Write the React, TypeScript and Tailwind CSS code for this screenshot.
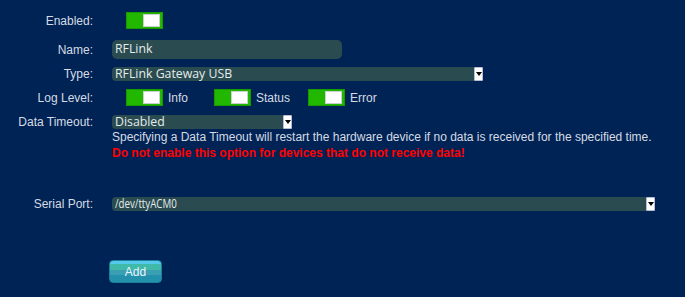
import React from "react";

function Toggle() {
  return (
    <div className="flex h-[17px] w-[37px] items-center justify-end border border-[#179a00] bg-[#22b800] pr-[2px]">
      <div className="h-[13px] w-[17px] border border-[#c8d0d0] bg-white" />
    </div>
  );
}

function Select({ value, width, condensed }: { value: string; width: string; condensed?: boolean }) {
  return (
    <div className={`flex h-[14px] items-stretch rounded-l-[4px] bg-[#2a4b50] ${width}`}>
      <div
        className="flex flex-1 items-center pl-[3px] text-[12.3px] leading-none text-[#e4ecec]"
        style={{ fontFamily: '"Open Sans", "Noto Sans", sans-serif' }}
      >
        {condensed ? (
          <span className="inline-block origin-left scale-x-[0.72] text-[13.5px]">{value}</span>
        ) : (
          value
        )}
      </div>
      <div className="flex w-[9px] items-start justify-center rounded-[1px] border border-[#b8bcd8] bg-white pt-[4px]">
        <div className="h-0 w-0 border-x-[3px] border-t-[4px] border-x-transparent border-t-black" />
      </div>
    </div>
  );
}

export default function App() {
  const label = "w-[93px] shrink-0 text-right text-[12px] text-[#d6dbe2]";
  return (
    <div
      className="min-h-[297px] w-full bg-[#002356] pt-[12px]"
      style={{ fontFamily: '"Liberation Sans", Arial, sans-serif' }}
    >
      <div className="flex h-[17px] items-center">
        <div className={label}>Enabled:</div>
        <div className="ml-[33px]">
          <Toggle />
        </div>
      </div>

      <div className="mt-[11px] flex h-[19px] items-center">
        <div className={label}>Name:</div>
        <div
          className="ml-[19px] flex h-[19px] w-[230px] items-center rounded-[5px] bg-[#2a4b50] pl-[3px] text-[12.3px] text-[#e4ecec]"
          style={{ fontFamily: '"Open Sans", "Noto Sans", sans-serif' }}
        >
          RFLink
        </div>
      </div>

      <div className="mt-[8px] flex h-[14px] items-center">
        <div className={label}>Type:</div>
        <div className="ml-[19px]">
          <Select value="RFLink Gateway USB" width="w-[371px]" />
        </div>
      </div>

      <div className="mt-[8px] flex h-[17px] items-center">
        <div className={label}>Log Level:</div>
        <div className="ml-[33px] flex items-center text-[12px] text-[#d6dbe2]">
          <Toggle />
          <span className="ml-[5px] mr-[26px]">Info</span>
          <Toggle />
          <span className="ml-[5px] mr-[18px]">Status</span>
          <Toggle />
          <span className="ml-[5px]">Error</span>
        </div>
      </div>

      <div className="mt-[9px] flex items-start">
        <div className={`${label} leading-[14px]`}>Data Timeout:</div>
        <div className="ml-[19px] flex flex-col">
          <Select value="Disabled" width="w-[180px]" />
          <div className="text-[12px] leading-[16px] text-[#d6dbe2]">
            Specifying a Data Timeout will restart the hardware device if no data is received for the specified time.
          </div>
          <div className="text-[12px] font-bold leading-[16px] text-[#ff0000]">
            Do not enable this option for devices that do not receive data!
          </div>
        </div>
      </div>

      <div className="mt-[36px] flex h-[14px] items-center">
        <div className={label}>Serial Port:</div>
        <div className="ml-[19px]">
          <Select value="/dev/ttyACM0" width="w-[543px]" condensed />
        </div>
      </div>

      <div className="mt-[49px] pl-[109px]">
        <button className="flex h-[23px] w-[53px] items-center justify-center rounded-[4px] border border-[#1e7f99] bg-[linear-gradient(to_bottom,#55c8ee_0%,#55c8ee_15%,#40b9a8_15%,#40b9a8_45%,#3a9fb2_45%,#3a9fb2_65%,#2391ab_65%,#2391ab_100%)] text-[12px] text-[#e8f4ff]">
          Add
        </button>
      </div>
    </div>
  );
}
